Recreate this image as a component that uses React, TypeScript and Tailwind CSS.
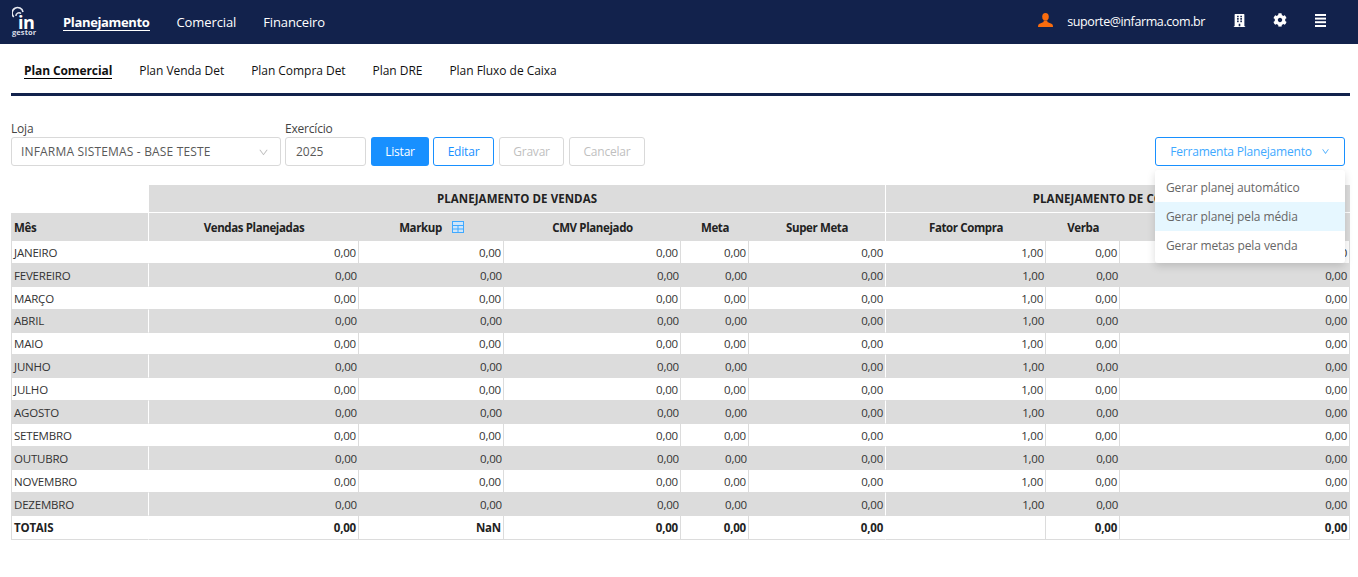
import { AiOutlineDown } from "react-icons/ai";
import { FaBuilding, FaCog } from "react-icons/fa";

const months = [
  "JANEIRO",
  "FEVEREIRO",
  "MARÇO",
  "ABRIL",
  "MAIO",
  "JUNHO",
  "JULHO",
  "AGOSTO",
  "SETEMBRO",
  "OUTUBRO",
  "NOVEMBRO",
  "DEZEMBRO",
];

const colWidths = [138, 210, 145, 177, 68, 137, 160, 74, 230];

const subHeaders = [
  "Vendas Planejadas",
  "Markup",
  "CMV Planejado",
  "Meta",
  "Super Meta",
  "Fator Compra",
  "Verba",
  "Compra Planejada",
];

const font = "[font-family:'Open_Sans','Noto_Sans',sans-serif]";

function Logo() {
  return (
    <div className="relative h-[36px] w-[26px] text-white">
      <svg viewBox="0 0 26 36" className="absolute left-0 top-0 h-[36px] w-[26px]" fill="none" stroke="#e8ebf2">
        <path d="M1.8 13 A5.5 5.5 0 1 1 11 8" strokeWidth="1.6" />
        <path d="M3.9 12 A3 3 0 0 1 9 9.6" strokeWidth="1.4" />
      </svg>
      <span className="absolute left-[6px] top-[12px] text-[18px] font-bold leading-[12px] tracking-[-0.5px]">
        in
      </span>
      <span className="absolute left-0 top-[25px] text-[7.5px] font-bold leading-[7px] tracking-[0.1px] text-[#d8dce6]">
        gestor
      </span>
    </div>
  );
}

function UserIcon() {
  return (
    <svg viewBox="0 0 15 14" className="h-[14px] w-[15px]" fill="#f96c0e">
      <ellipse cx="7.5" cy="3.8" rx="3.3" ry="3.8" />
      <path d="M5.6 7.5 H9.4 V9 L14 11 Q15 11.6 15 14 H0 Q0 11.6 1 11 L5.6 9 Z" />
    </svg>
  );
}

function CalcIcon() {
  return (
    <svg viewBox="0 0 12 12" className="ml-[10px] inline-block h-[12px] w-[12px] align-[-1px]">
      <rect x="0.5" y="0.5" width="11" height="11" fill="#cfe6fb" stroke="#40a9ff" />
      <path d="M0.5 4.5H11.5M6 4.5V11.5M6 8H11.5M0.5 8H6" stroke="#40a9ff" fill="none" />
    </svg>
  );
}

function LinesIcon() {
  return (
    <svg viewBox="0 0 11 13" className="h-[13px] w-[11px]" fill="#fff">
      <rect x="0" y="0" width="11" height="2" />
      <rect x="0" y="3.6" width="11" height="2" />
      <rect x="0" y="7.2" width="11" height="2" />
      <rect x="0" y="11" width="11" height="2" />
    </svg>
  );
}

export default function App() {
  return (
    <main className={`min-h-[577px] bg-white text-[12px] text-[#333] ${font}`}>
      {/* topo */}
      <header className="flex h-[44px] items-center bg-[#12224c] pl-[12px] pr-[32px] text-[13px] text-white">
        <Logo />
        <nav className="ml-[25px] mt-[2px] flex items-center gap-[27px]">
          <span className="border-b border-white font-bold leading-[15px] tracking-[-0.35px]">Planejamento</span>
          <span className="tracking-[-0.1px]">Comercial</span>
          <span className="tracking-[-0.15px]">Financeiro</span>
        </nav>
        <div className="ml-auto flex items-center">
          <div className="mt-[-4px]">
            <UserIcon />
          </div>
          <span className="ml-[14px] mt-[1px] text-[12.5px] tracking-[-0.4px]">suporte@infarma.com.br</span>
          <FaBuilding className="ml-[28px] mt-[-4px] text-[13px]" />
          <FaCog className="ml-[27px] mt-[-4px] text-[14px]" />
          <div className="ml-[28px] mt-[-4px]">
            <LinesIcon />
          </div>
        </div>
      </header>

      {/* abas */}
      <div className="ml-[11px] mr-[8px] flex h-[52px] items-center gap-[27px] border-b-[3px] border-[#12224c] pl-[13px] pt-[4px] text-[12px] tracking-[-0.04px] text-[#111]">
        <span className="border-b border-black font-bold leading-[15px] tracking-[-0.1px]">Plan Comercial</span>
        <span>Plan Venda Det</span>
        <span>Plan Compra Det</span>
        <span>Plan DRE</span>
        <span>Plan Fluxo de Caixa</span>
      </div>

      {/* filtros */}
      <div className="relative ml-[11px] mr-[8px] mt-[24px] flex h-[46px] items-end">
        <div className="w-[270px]">
          <div className="text-[12px] leading-[17px] tracking-[-0.2px] text-[#444]">Loja</div>
          <div className="flex h-[29px] items-center justify-between rounded-[3px] border border-[#d9d9d9] pl-[9px] pr-[11px] pt-[1px] text-[12px] tracking-[0.17px] text-[#595959]">
            INFARMA SISTEMAS - BASE TESTE
            <AiOutlineDown className="text-[11px] text-[#bfbfbf]" />
          </div>
        </div>
        <div className="ml-[4px] w-[81px]">
          <div className="text-[12px] leading-[17px] tracking-[-0.2px] text-[#444]">Exercício</div>
          <div className="flex h-[29px] items-center rounded-[3px] border border-[#d9d9d9] pl-[10px] pt-[1px] text-[12px] text-[#595959]">
            2025
          </div>
        </div>
        <button className="ml-[5px] h-[29px] w-[58px] rounded-[3px] bg-[#1890ff] text-[12px] tracking-[-0.2px] text-white">Listar</button>
        <button className="ml-[4px] h-[29px] w-[61px] rounded-[3px] border border-[#1890ff] text-[12px] tracking-[-0.2px] text-[#1890ff]">Editar</button>
        <button className="ml-[5px] h-[29px] w-[65px] rounded-[3px] border border-[#d9d9d9] text-[12px] tracking-[-0.2px] text-[#bfbfbf]">Gravar</button>
        <button className="ml-[5px] h-[29px] w-[76px] rounded-[3px] border border-[#d9d9d9] text-[12px] tracking-[-0.2px] text-[#bfbfbf]">Cancelar</button>
        <button className="ml-auto mr-[5px] flex h-[29px] w-[190px] items-center justify-center gap-[9px] rounded-[3px] border border-[#1890ff] text-[12px] tracking-[-0.2px] text-[#40a9ff]">
          Ferramenta Planejamento
          <AiOutlineDown className="text-[9px]" />
        </button>

        {/* menu aberto */}
        <div className="absolute right-[5px] top-[50px] z-10 w-[190px] rounded-[3px] bg-white py-[3px] text-[12px] tracking-[-0.1px] text-[#666] shadow-[0_3px_8px_rgba(0,0,0,0.15)]">
          <div className="flex h-[29px] items-center px-[11px] pt-[1px]">Gerar planej automático</div>
          <div className="flex h-[29px] items-center bg-[#e6f7ff] px-[11px] pt-[1px]">Gerar planej pela média</div>
          <div className="flex h-[29px] items-center px-[11px] pt-[1px]">Gerar metas pela venda</div>
        </div>
      </div>

      {/* tabela */}
      <div className="ml-[11px] mt-[19px]">
        <table className="w-[1339px] table-fixed border-separate border-spacing-0 text-[11.5px] tracking-[-0.2px]">
          <colgroup>
            {colWidths.map((w, i) => (
              <col key={i} style={{ width: w }} />
            ))}
          </colgroup>
          <thead className="font-bold text-[#222]">
            <tr className="h-[28px] tracking-[0.07px]">
              <th className="bg-white" />
              <th colSpan={5} className="border-b border-r border-white bg-[#dcdcdc] font-bold">
                PLANEJAMENTO DE VENDAS
              </th>
              <th colSpan={3} className="border-b border-white bg-[#dcdcdc] font-bold">
                PLANEJAMENTO DE COMPRAS
              </th>
            </tr>
            <tr className="h-[28px] tracking-[-0.38px]">
              <th className="border-r border-white bg-[#dcdcdc] pl-[3px] pt-[1px] text-left font-bold">Mês</th>
              {subHeaders.map((h, i) => (
                <th
                  key={h}
                  className={`bg-[#dcdcdc] pt-[1px] font-bold ${i === 4 ? "border-r border-white" : ""}`}
                >
                  {h}
                  {h === "Markup" && <CalcIcon />}
                </th>
              ))}
            </tr>
          </thead>
          <tbody className="text-[#333]">
            {months.map((m, r) => (
              <tr key={m} className={`h-[22.9px] ${r % 2 === 1 ? "bg-[#dcdcdc]" : "bg-white"}`}>
                <td className="border-b border-l border-r border-b-[#dcdcdc] border-l-[#dcdcdc] border-r-white pl-[2px] pt-[1px]">
                  {m}
                </td>
                {colWidths.slice(1).map((_, c) => (
                  <td
                    key={c}
                    className={`border-b border-b-[#dcdcdc] pr-[2px] pt-[1px] text-right ${
                      c === 4
                        ? "border-r border-r-white"
                        : r % 2 === 1 && c !== 7
                          ? ""
                          : "border-r border-r-[#dcdcdc]"
                    }`}
                  >
                    {c === 5 ? "1,00" : "0,00"}
                  </td>
                ))}
              </tr>
            ))}
            <tr className="h-[24px] font-bold text-[#222]">
              <td className="border-b border-l border-r border-[#dcdcdc] border-r-white pl-[2px]">TOTAIS</td>
              <td className="border-b border-r border-[#dcdcdc] pr-[2px] text-right">0,00</td>
              <td className="border-b border-r border-[#dcdcdc] pr-[2px] text-right">NaN</td>
              <td className="border-b border-r border-[#dcdcdc] pr-[2px] text-right">0,00</td>
              <td className="border-b border-r border-[#dcdcdc] pr-[2px] text-right">0,00</td>
              <td className="border-b border-r border-b-[#dcdcdc] border-r-white pr-[2px] text-right">0,00</td>
              <td className="border-b border-r border-[#dcdcdc] pr-[2px] text-right" />
              <td className="border-b border-r border-[#dcdcdc] pr-[2px] text-right">0,00</td>
              <td className="border-b border-r border-[#dcdcdc] pr-[2px] text-right">0,00</td>
            </tr>
          </tbody>
        </table>
      </div>
    </main>
  );
}
